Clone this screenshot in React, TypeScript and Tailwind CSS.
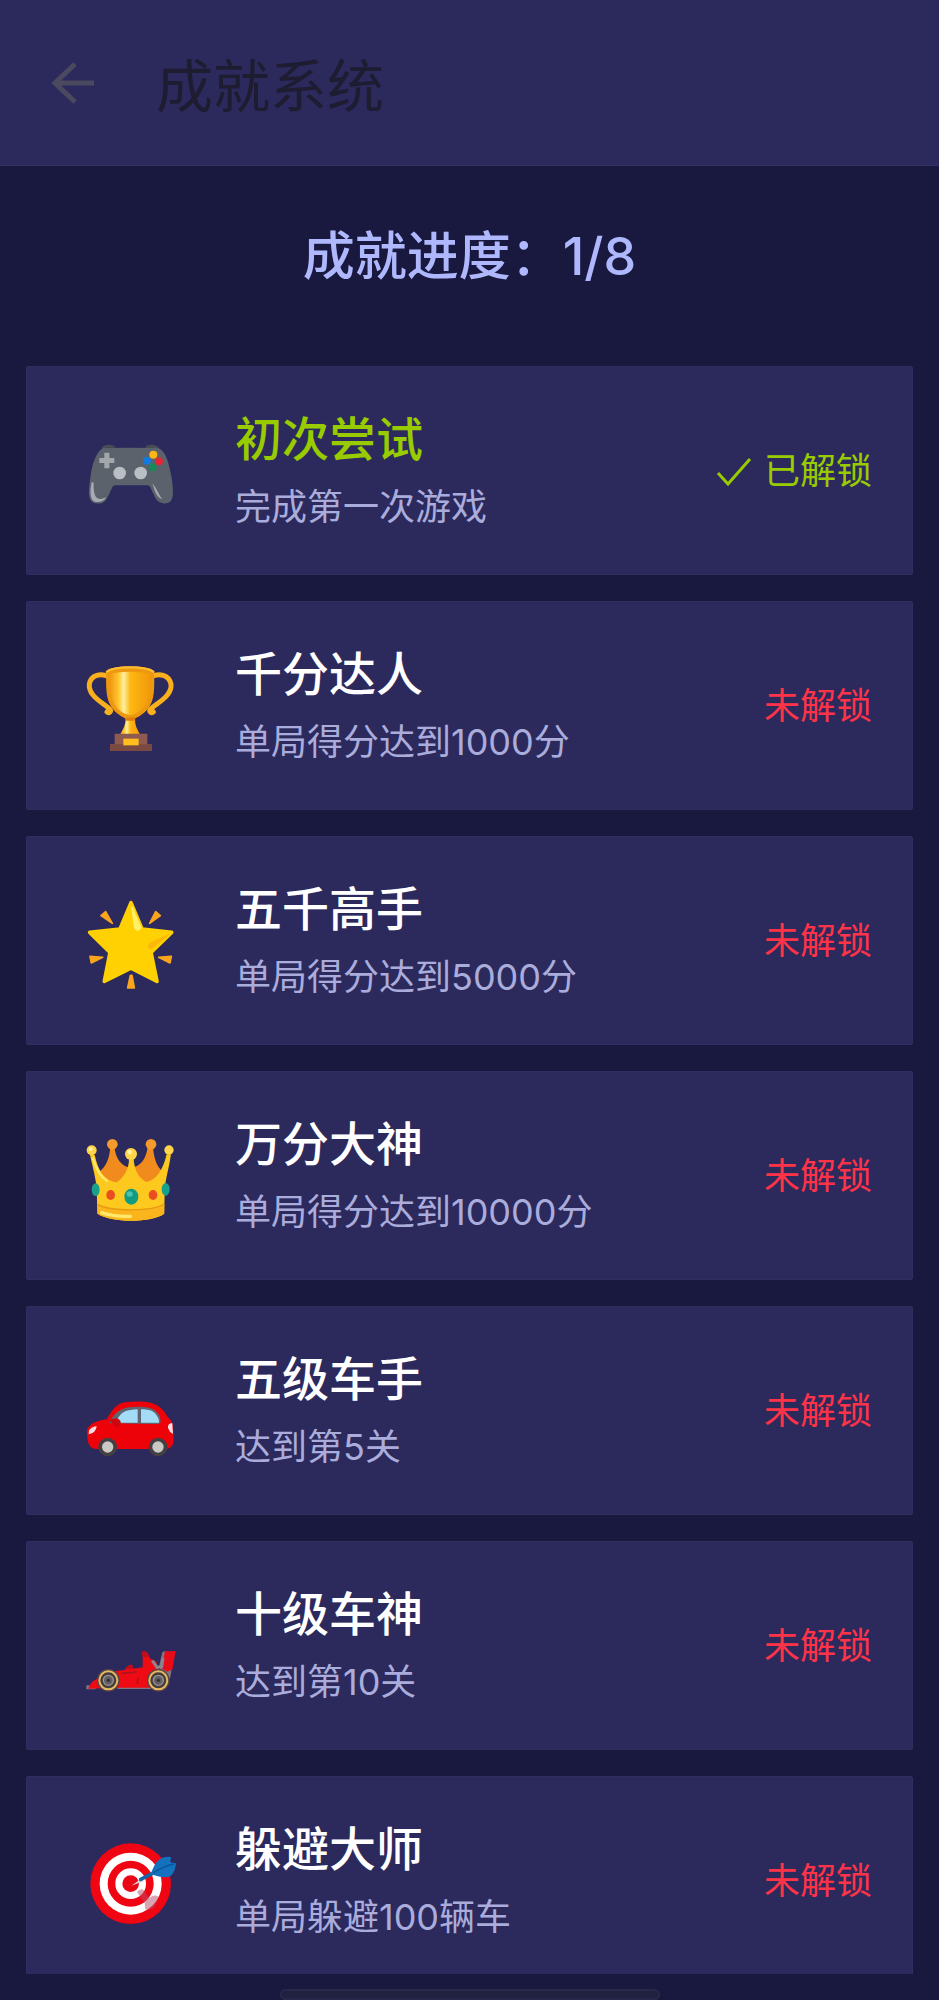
import React from 'react';

const GamepadIcon: React.FC = () => (
  <svg viewBox="36 9 288 288" className="h-24 w-24" aria-hidden="true">
    <path d="M92 84c4-12 38-14 42-1zM222 83c4-13 38-11 42 2z" fill="#464d57" />
    <path
      d="M96 84q84-2 166 0c22 8 32 44 40 90c5 32 6 58-2 68c-7 10-27 11-38 2c-10-8-16-26-22-38q-4-10-12-10H134q-8 0-12 10c-6 12-12 30-22 39c-11 9-33 7-40-3c-8-11-7-34-2-68c6-46 18-78 38-90z"
      fill="#5b626b"
    />
    <path d="M62 186c-6 28-5 56 10 59c14 3 28-2 34-14c-8 6-24 9-31 0c-6-9-8-25-7-43zM244 190c10 10 18 32 30 48c-14-4-20-18-24-30z" fill="#a5abb2" />
    <path d="M100 98h15v16h15v15h-15v16h-15v-16H85v-15h15z" fill="#a2a7ac" />
    <circle cx="146" cy="159" r="19" fill="#b9bfc4" />
    <circle cx="209" cy="159" r="19" fill="#b9bfc4" />
    <circle cx="247" cy="104" r="12" fill="#fbb616" />
    <circle cx="228" cy="122" r="12" fill="#1479dc" />
    <circle cx="264" cy="124" r="12" fill="#e32636" />
    <circle cx="245" cy="142" r="12" fill="#188958" />
  </svg>
);

const TrophyIcon: React.FC = () => (
  <svg viewBox="36 54 288 288" className="h-24 w-24" aria-hidden="true">
    <defs>
      <linearGradient id="trophy-cup">
        <stop offset="0" stopColor="#f09a10" />
        <stop offset=".2" stopColor="#ffc42d" />
        <stop offset=".34" stopColor="#fff0a0" />
        <stop offset=".5" stopColor="#fdb813" />
        <stop offset="1" stopColor="#f29a0a" />
      </linearGradient>
    </defs>
    <g fill="none" stroke="#f9b01c" strokeWidth="15" strokeLinecap="round">
      <path d="M114 110C90 98 60 104 55 132c-3 26 20 44 42 60c14 10 26 18 20 24q-3 4-9 0" />
      <path d="M240 110c24-12 54-6 60 22c3 26-20 44-42 60c-14 10-26 18-20 24q3 4 9 0" />
    </g>
    <path d="M106 94c18-20 126-20 143 0c2 50 2 88-18 112c-16 19-37 28-40 30h-26c-3-2-25-11-40-30c-20-24-21-62-19-112z" fill="#ed980f" />
    <path d="M119 102c30-9 87-9 117 0c3 42 0 74-16 96c-12 16-30 27-43 27s-31-11-43-27c-16-22-18-54-15-96z" fill="url(#trophy-cup)" />
    <path d="M108 95c20-17 118-17 139 0" fill="none" stroke="#ffbd31" strokeWidth="7" strokeLinecap="round" />
    <path d="M164 232h28c-1 24 6 36 16 52h-61c9-16 18-28 17-52z" fill="url(#trophy-cup)" />
    <path d="M164 232h28l1 10h-30z" fill="#e27c0c" />
    <path d="M131 281h98v32h13v20H117v-20h14z" fill="#8f5b50" />
    <path d="M117 313h125v20H117z" fill="#7a4942" />
    <path d="M157 296h46v20h-46z" fill="#ffc01f" />
  </svg>
);

const StarIcon: React.FC = () => (
  <svg viewBox="36 39 288 288" className="h-24 w-24" aria-hidden="true">
    <g fill="#fba51d" stroke="#fba51d" strokeWidth="5" strokeLinejoin="round">
      <path d="M90 107l14-12 20 35zM254 95l14 12-32 23zM57 229l38 3-34 17zM301 229l-38 3 34 17zM178 286h5l7 38h-20z" />
    </g>
    <path
      d="M180 68l33 79 89 10-62 60 18 87-78-40-80 40 17-87-61-60 91-10z"
      fill="#ffd102"
      stroke="#ffd102"
      strokeWidth="11"
      strokeLinejoin="round"
    />
    <path d="M180 78q8 1 12 20l19 43c-2 15-18 14-22 3z" fill="#fff069" />
    <path d="M299 160l-54 45c-9 7-20-2-11-13c10-10 28-14 65-32z" fill="#fdb60a" />
  </svg>
);

const CrownIcon: React.FC = () => (
  <svg viewBox="36 54 288 288" className="h-24 w-24" aria-hidden="true">
    <path d="M118 112h12c6 38 20 56 50 62c30-6 44-24 50-62h16c4 44 14 58 30 74l-14 46H98l-14-46c22-16 31-40 34-74z" fill="#f18b1d" />
    <circle cx="124" cy="103" r="16" fill="#f49a2c" />
    <circle cx="240" cy="103" r="16" fill="#f49a2c" />
    <path
      d="M57 134h14c12 56 34 78 66 83c24-16 37-42 37-70h14c2 30 12 54 37 69c30-4 51-36 62-83h13c-4 30-12 58-18 92l-3 86c-38 28-158 28-200 0l-2-82c-6-40-14-66-20-95z"
      fill="#fdc91e"
    />
    <path d="M80 283c38 22 164 22 200-1v29c-38 28-158 28-200 0z" fill="#f9b51b" />
    <path d="M80 283c38 22 164 22 200-1" fill="none" stroke="#e99812" strokeWidth="4" />
    <path d="M92 308c22 8 54 12 86 11" fill="none" stroke="#ffe96c" strokeWidth="10" strokeLinecap="round" />
    <path d="M66 145c8 28 20 54 42 67" fill="none" stroke="#ffe96c" strokeWidth="7" strokeLinecap="round" />
    <g fill="#fed54a">
      <circle cx="62" cy="121" r="15" />
      <circle cx="180" cy="132" r="18" />
      <circle cx="294" cy="120" r="14" />
    </g>
    <circle cx="176" cy="126" r="7" fill="#fff3a2" />
    <circle cx="59" cy="117" r="6" fill="#fff3a2" />
    <ellipse cx="74" cy="239" rx="12" ry="19" fill="#17a18d" />
    <ellipse cx="284" cy="238" rx="12" ry="19" fill="#17a18d" />
    <ellipse cx="181" cy="260" rx="21" ry="24" fill="#119b83" />
    <ellipse cx="176" cy="252" rx="9" ry="8" fill="#4bc3ad" />
    <ellipse cx="119" cy="255" rx="13" ry="15" fill="#ea4d20" />
    <ellipse cx="246" cy="255" rx="13" ry="15" fill="#ea4d20" />
  </svg>
);

const CarIcon: React.FC = () => (
  <svg viewBox="36 -21 288 288" className="h-24 w-24" aria-hidden="true">
    <path
      d="M48 182c2-16 20-28 60-35c16-28 28-46 54-50c26-4 60-3 78 1c28 9 40 24 50 43c15 10 18 30 18 62c0 22-6 30-20 34H75c-22-3-27-20-27-55z"
      fill="#ed0209"
    />
    <path d="M116 160c8-24 28-44 58-48c32-4 62-2 76 8c14 9 21 25 18 38q-2 5-22 4z" fill="#5d6672" />
    <path d="M136 158c4-20 20-36 42-38q12-2 22-2v40zM210 118c20 0 36 3 44 14q12 16 10 26h-54z" fill="#a4dcf7" />
    <path d="M118 152c8-10 28-10 31 4q1 14-8 14-14 0-23-18z" fill="#cc0610" />
    <path d="M54 181q10-12 23-12-2 20-24 24zM304 160c-10 0-14 6-13 14q4 12 15 18z" fill="#f6dce0" />
    <circle cx="110" cy="231" r="28" fill="#443f42" />
    <circle cx="261" cy="231" r="28" fill="#443f42" />
    <circle cx="110" cy="231" r="17" fill="#cbc9c4" />
    <circle cx="261" cy="231" r="17" fill="#cbc9c4" />
  </svg>
);

const RaceCarIcon: React.FC = () => (
  <svg viewBox="36 -66 288 288" className="h-24 w-24" aria-hidden="true">
    <path d="M46 196h28v12H46zM140 190h104v17H140zM264 140l10-44 12-4 16 56-4 24-10 12z" fill="#7e7680" />
    <path d="M282 94l32-1-10 56-16 6-16-10z" fill="#e80b18" />
    <path d="M212 102q-2-8 6-8 10 0 14 9l4 12 20 10 10 30 22 10-4 26-40 12h-94L52 206q4-18 28-31l34-20 48-5q12-20 22-15l2 11 29-4v-35z" fill="#ee0b14" />
    <path d="M160 148q14-18 25-8l-2 6zM212 97q8-6 17 4l4 10h-18z" fill="#bd0c1b" />
    <path d="M244 122l14 20 14-2 4-26" fill="none" stroke="#8d858c" strokeWidth="9" />
    <path d="M150 160l48-4M202 174l-4 18" stroke="#ad1420" strokeWidth="5" />
    <g strokeWidth="4">
      <circle cx="112" cy="181" r="32" fill="#463b3d" stroke="#584548" />
      <circle cx="262" cy="181" r="32" fill="#463b3d" stroke="#584548" />
      <circle cx="112" cy="181" r="27" fill="none" stroke="#e5ba60" strokeWidth="6" />
      <circle cx="262" cy="181" r="27" fill="none" stroke="#e5ba60" strokeWidth="6" />
      <circle cx="112" cy="181" r="15" fill="#625e65" stroke="#99958f" />
      <circle cx="262" cy="181" r="15" fill="#625e65" stroke="#99958f" />
    </g>
    <circle cx="112" cy="181" r="5" fill="#322e38" />
    <circle cx="262" cy="181" r="5" fill="#322e38" />
  </svg>
);

const TargetIcon: React.FC = () => (
  <svg viewBox="36 37 288 288" className="h-24 w-24" aria-hidden="true">
    <circle cx="179" cy="189" r="121" fill="#f00513" />
    <circle cx="179" cy="189" r="93" fill="#fff" />
    <circle cx="179" cy="189" r="69" fill="#f00513" />
    <circle cx="179" cy="189" r="46" fill="#fff" />
    <circle cx="179" cy="189" r="25" fill="#e90816" />
    <path d="M198 214q10-12 20-6l16 24q18-12 28-4l-10 30q-16 14-29 8l-2-18z" fill="#b64c68" opacity=".5" />
    <path d="M181 195l32-23 5 10z" fill="#d7ccd2" />
    <path d="M209 176l46-23" stroke="#1265a6" strokeWidth="11" strokeLinecap="round" />
    <path d="M240 160c6-22 18-44 34-49q14-4 26-2l-2 16 17 3c-2 20-8 35-22 41q-20 4-53-9z" fill="#1471bd" />
    <path d="M247 156q32-20 62-26" stroke="#0b5698" strokeWidth="4" fill="none" />
  </svg>
);

interface Achievement {
  title: string;
  description: string;
  unlocked: boolean;
  Icon: React.FC;
}

const achievements: Achievement[] = [
  { title: '初次尝试', description: '完成第一次游戏', unlocked: true, Icon: GamepadIcon },
  { title: '千分达人', description: '单局得分达到1000分', unlocked: false, Icon: TrophyIcon },
  { title: '五千高手', description: '单局得分达到5000分', unlocked: false, Icon: StarIcon },
  { title: '万分大神', description: '单局得分达到10000分', unlocked: false, Icon: CrownIcon },
  { title: '五级车手', description: '达到第5关', unlocked: false, Icon: CarIcon },
  { title: '十级车神', description: '达到第10关', unlocked: false, Icon: RaceCarIcon },
  { title: '躲避大师', description: '单局躲避100辆车', unlocked: false, Icon: TargetIcon },
];

const AchievementCard: React.FC<{ item: Achievement }> = ({ item }) => {
  const { title, description, unlocked, Icon } = item;
  return (
    <li className="flex min-h-[209px] shrink-0 items-center rounded-xs border border-[#312e5f] bg-[#2c295d] pr-10 pl-14">
      <Icon />
      <div className="ml-14 flex-1 pt-1">
        <h2
          className={`text-[47px] leading-[60px] font-medium ${unlocked ? 'text-[#99cc00]' : 'text-white'}`}
        >
          {title}
        </h2>
        <p className="mt-2 text-[36px] leading-[60px] text-[#aaaddb]">{description}</p>
      </div>
      {unlocked ? (
        <span className="flex items-center gap-3 text-[36px] leading-[60px] text-[#99cc00]">
          <svg viewBox="0 0 36 32" className="h-8 w-9" fill="none" stroke="currentColor" strokeWidth="3" aria-hidden="true">
            <path d="M2 18l10 11L34 4" />
          </svg>
          已解锁
        </span>
      ) : (
        <span className="text-[36px] leading-[60px] text-[#ff3348]">未解锁</span>
      )}
    </li>
  );
};

const App: React.FC = () => {
  return (
    <div className="flex h-screen flex-col bg-[#191940] font-['Inter','Noto_Sans_CJK_SC',sans-serif]">
      <header className="flex h-[166px] shrink-0 items-center border-b border-[#353163] bg-[#2c295d] pl-12">
        <button type="button" aria-label="返回" className="text-[#4b495f]">
          <svg viewBox="0 0 48 48" className="h-12 w-12" fill="none" stroke="currentColor" strokeWidth="5" aria-hidden="true">
            <path d="M46 24H7M27 5L7 24l20 19" />
          </svg>
        </button>
        <h1 className="ml-[60px] pt-2 text-[57px] leading-[80px] text-[#1d1c30]">成就系统</h1>
      </header>

      <main className="flex min-h-0 flex-1 flex-col overflow-y-auto [scrollbar-width:none]">
        <p className="pt-[51px] pb-[69px] text-center text-[52px] leading-[80px] font-medium text-[#afb8fd]">
          成就进度：1/8
        </p>
        <ul className="flex flex-col gap-[26px] px-[26px]">
          {achievements.map((item) => (
            <AchievementCard key={item.title} item={item} />
          ))}
        </ul>
      </main>

      {/* System gesture bar */}
      <footer className="flex h-[26px] shrink-0 items-end justify-center">
        <div className="h-[11px] w-[380px] rounded-full border-2 border-[#29284a] bg-[#20203f]" />
      </footer>
    </div>
  );
};

export default App;
